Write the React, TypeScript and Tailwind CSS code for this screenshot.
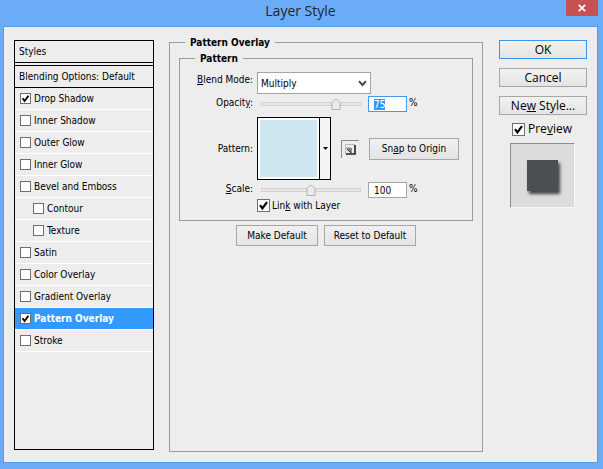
import React, { useState, useEffect, useRef } from 'react';

interface CheckBoxProps {
  checked: boolean;
  onChange: (checked: boolean) => void;
  id: string;
  size?: 'small' | 'normal';
}

const CheckBox: React.FC<CheckBoxProps> = ({ checked, onChange, id, size = 'normal' }) => (
  <span className="grid shrink-0">
    <input
      id={id}
      type="checkbox"
      checked={checked}
      onChange={(e) => onChange(e.target.checked)}
      className={`col-start-1 row-start-1 appearance-none border border-[#6e6e6e] bg-white ${
        size === 'small' ? 'size-[11px]' : 'size-[13px]'
      }`}
    />
    {checked && (
      <svg
        viewBox="0 0 13 13"
        className={`pointer-events-none col-start-1 row-start-1 ${size === 'small' ? 'size-[11px]' : 'size-[13px]'}`}
      >
        <path d="M3 6.2 L5.4 9.4 L10 3.2" fill="none" stroke="#000" strokeWidth="2.2" />
      </svg>
    )}
  </span>
);

interface SliderProps {
  label: string;
  value: number;
  max: number;
  onChange: (value: number) => void;
}

const Slider: React.FC<SliderProps> = ({ label, value, max, onChange }) => (
  <div className="relative flex h-4 w-[100px] items-center">
    <input
      type="range"
      aria-label={label}
      min={0}
      max={max}
      value={value}
      onChange={(e) => onChange(Number(e.target.value))}
      className="h-1 w-full appearance-none border border-[#d2d2d2] bg-[#e6e6e6] [&::-webkit-slider-thumb]:size-3 [&::-webkit-slider-thumb]:appearance-none [&::-webkit-slider-thumb]:opacity-0"
    />
    <svg
      viewBox="0 0 11 13"
      className="pointer-events-none absolute top-[2px] h-[13px] w-[11px] -translate-x-1/2"
      style={{ left: `${(value / max) * 100}%` }}
    >
      <path d="M1.5 11.5 V4.5 L4.5 1.5 H6.5 L9.5 4.5 V11.5 Z" fill="#ececec" stroke="#b0b0b0" />
    </svg>
  </div>
);

interface PercentFieldProps {
  id: string;
  value: number;
  onChange: (value: number) => void;
  active?: boolean;
}

const PercentField: React.FC<PercentFieldProps> = ({ id, value, onChange, active = false }) => {
  const inputRef = useRef<HTMLInputElement>(null);

  // The active field opens with its value selected
  useEffect(() => {
    if (active) {
      inputRef.current?.focus();
      inputRef.current?.select();
    }
  }, [active]);

  return (
    <div className="flex items-start gap-[2px]">
      <input
        ref={inputRef}
        id={id}
        type="text"
        value={value}
        onChange={(e) => onChange(Number(e.target.value) || 0)}
        className={`h-4 w-[39px] border bg-white px-[5px] outline-none selection:bg-[#3399ff] selection:text-white ${
          active ? 'border-[#4a98ea]' : 'border-[#a5a5a5]'
        }`}
      />
      <span className="leading-[13px]">%</span>
    </div>
  );
};

interface EffectItem {
  name: string;
  nested?: boolean;
}

const effects: EffectItem[] = [
  { name: 'Drop Shadow' },
  { name: 'Inner Shadow' },
  { name: 'Outer Glow' },
  { name: 'Inner Glow' },
  { name: 'Bevel and Emboss' },
  { name: 'Contour', nested: true },
  { name: 'Texture', nested: true },
  { name: 'Satin' },
  { name: 'Color Overlay' },
  { name: 'Gradient Overlay' },
  { name: 'Pattern Overlay' },
  { name: 'Stroke' },
];

const StyleList: React.FC = () => {
  const [enabled, setEnabled] = useState<string[]>(['Drop Shadow', 'Pattern Overlay']);
  const selected = 'Pattern Overlay';

  const toggle = (name: string, on: boolean) => {
    setEnabled(on ? [...enabled, name] : enabled.filter((n) => n !== name));
  };

  return (
    <aside className="mt-[4px] mb-[2px] w-[140px] shrink-0 border border-black">
      <button type="button" className="block h-[22px] w-full border-b border-black px-1 text-left">
        Styles
      </button>
      <button
        type="button"
        className="mt-[2px] block h-[23px] w-full border-y border-black px-1 text-left whitespace-nowrap"
      >
        Blending Options: Default
      </button>
      <ul>
        {effects.map(({ name, nested }) => (
          <li
            key={name}
            className={`flex h-[22px] items-center gap-[3px] border-b border-white pr-1 ${
              nested ? 'pl-[18px]' : 'pl-[5px]'
            } ${name === selected ? 'bg-[#3399ff] font-bold text-white' : ''}`}
          >
            <CheckBox
              id={`effect-${name}`}
              size="small"
              checked={enabled.includes(name)}
              onChange={(on) => toggle(name, on)}
            />
            <label htmlFor={`effect-${name}`} className="whitespace-nowrap">
              {name}
            </label>
          </li>
        ))}
      </ul>
    </aside>
  );
};

const smallButton =
  'border border-[#a6a6a6] bg-linear-to-b from-[#f0f0f0] to-[#e4e4e4] text-center whitespace-nowrap';
const rowLabel = 'w-[73px] shrink-0 text-right whitespace-nowrap';

const PatternPanel: React.FC = () => {
  const [opacity, setOpacity] = useState(75);
  const [scale, setScale] = useState(100);
  const [linked, setLinked] = useState(true);

  return (
    <fieldset className="min-w-0 flex-1 border border-[#9a9a9a] px-[9px] pt-[3px]">
      <legend className="ml-[6px] px-[5px] leading-[13px] font-bold">Pattern Overlay</legend>

      <fieldset className="border border-[#9a9a9a] pt-[7px] pb-2">
        <legend className="ml-[15px] px-[5px] leading-[13px] font-bold">Pattern</legend>

        <div className="flex gap-1">
          <label htmlFor="blend" className={`${rowLabel} leading-[16px]`}>
            <u>B</u>lend Mode:
          </label>
          <div className="grid w-[114px]">
            <select
              id="blend"
              className="col-start-1 row-start-1 h-[22px] appearance-none border border-[#a5a5a5] bg-white pl-[3px]"
            >
              <option>Multiply</option>
              <option>Normal</option>
              <option>Screen</option>
            </select>
            <svg
              viewBox="0 0 9 7"
              className="pointer-events-none col-start-1 row-start-1 mr-1 h-[7px] w-[9px] self-center justify-self-end"
            >
              <path d="M1 1.2 L4.5 5 L8 1.2" fill="none" stroke="#444" strokeWidth="1.9" />
            </svg>
          </div>
        </div>

        <div className="mt-[2px] flex gap-1">
          <label htmlFor="opacity" className={`${rowLabel} leading-[14px]`}>
            Opacit<u>y</u>:
          </label>
          <div className="flex gap-[7px] pl-1">
            <Slider label="Opacity slider" value={opacity} max={100} onChange={setOpacity} />
            <PercentField id="opacity" value={opacity} onChange={setOpacity} active />
          </div>
        </div>

        <div className="mt-[5px] flex items-center gap-1">
          <span className={rowLabel}>Pattern:</span>
          <button
            type="button"
            aria-label="Choose pattern"
            className="flex h-[63px] w-[74px] shrink-0 border border-black bg-[#f4f4f4]"
          >
            <span className="h-full flex-1 border-2 border-white bg-[#cde6f0]" />
            <span className="flex h-full w-[11px] items-center justify-center border-l border-black">
              <svg viewBox="0 0 5 3" className="h-[3px] w-[5px]">
                <path d="M0 0 H5 L2.5 3 Z" fill="#000" />
              </svg>
            </span>
          </button>
          <button
            type="button"
            aria-label="New preset"
            className="ml-[6px] flex size-[18px] shrink-0 items-center justify-center border-t border-l border-[#8a8a8a]"
          >
            <svg viewBox="0 0 11 11" className="size-[11px]">
              <path d="M0.5 10 V0.5 H10" fill="none" stroke="#b5b5b5" />
              <path d="M1 10 H10 V1" fill="none" stroke="#222" strokeWidth="1.6" />
              <path d="M1.5 3.5 H5.5 V9 L1.5 5 Z" fill="#8a8a8a" />
              <path d="M2 5 L6 9 V4" fill="none" stroke="#333" />
            </svg>
          </button>
          <button type="button" className={`${smallButton} ml-[6px] h-[22px] w-[90px]`}>
            Sn<u>a</u>p to Origin
          </button>
        </div>

        <div className="mt-[2px] flex gap-1">
          <label htmlFor="scale" className={`${rowLabel} leading-[14px]`}>
            <u>S</u>cale:
          </label>
          <div className="flex gap-[7px] pl-1">
            <Slider label="Scale slider" value={scale} max={200} onChange={setScale} />
            <PercentField id="scale" value={scale} onChange={setScale} />
          </div>
        </div>

        <div className="mt-px flex items-center gap-[2px] pl-[77px]">
          <CheckBox id="link" checked={linked} onChange={setLinked} />
          <label htmlFor="link" className="leading-[13px]">
            Lin<u>k</u> with Layer
          </label>
        </div>
      </fieldset>

      <div className="mt-1 flex justify-center gap-[6px]">
        <button type="button" className={`${smallButton} h-[21px] w-[82px]`}>
          Make Default
        </button>
        <button type="button" className={`${smallButton} h-[21px] w-[92px]`}>
          Reset to Default
        </button>
      </div>
    </fieldset>
  );
};

const dialogButton =
  "h-[19px] border bg-linear-to-b from-[#f2f2f2] to-[#e4e4e4] font-['Open_Sans',sans-serif] text-[12px] leading-[16px]";

const Actions: React.FC = () => {
  const [preview, setPreview] = useState(true);

  return (
    <div className="mt-[4px] ml-px flex w-[88px] shrink-0 flex-col">
      <div className="flex flex-col gap-[9px]">
        <button type="button" className={`${dialogButton} border-[#3c96f0]`}>
          OK
        </button>
        <button type="button" className={`${dialogButton} border-[#a6a6a6]`}>
          Cancel
        </button>
        <button type="button" className={`${dialogButton} border-[#a6a6a6]`}>
          Ne<u>w</u> Style...
        </button>
      </div>
      <div className="mt-[7px] flex items-center gap-[3px] pl-[13px]">
        <CheckBox id="preview" checked={preview} onChange={setPreview} />
        <label htmlFor="preview" className="font-['Open_Sans',sans-serif] text-[12px] leading-[14px]">
          Pre<u>v</u>iew
        </label>
      </div>
      <div className="mt-[7px] ml-[11px] flex size-[65px] items-center justify-center border border-t-[#8c8c8c] border-r-[#f8f8f8] border-b-[#f8f8f8] border-l-[#8c8c8c] bg-[#dcdcdc]">
        {preview && <div className="size-[31px] bg-[#4a4f52] shadow-[2px_3px_3px_#444]" />}
      </div>
    </div>
  );
};

export default function App() {
  return (
    <div className="flex min-h-screen flex-col bg-[#6aacf7] pr-[5px] pb-[6px] pl-[3px] font-['DejaVu_Sans_Condensed','DejaVu_Sans',sans-serif] text-[10px] text-black">
      <header className="grid h-[26px] grid-cols-[32px_1fr_32px]">
        <h1 className="col-start-2 text-center font-['Open_Sans',sans-serif] text-[14px] leading-[21px] text-[#262626]">
          Layer Style
        </h1>
        <button
          type="button"
          aria-label="Close"
          className="flex h-4 w-8 items-center justify-center bg-[#c75050]"
        >
          <svg viewBox="0 0 8 8" className="size-2">
            <path d="M0.8 0.8 L7.2 7.2 M7.2 0.8 L0.8 7.2" stroke="#fff" strokeWidth="1.7" />
          </svg>
        </button>
      </header>
      <main className="flex flex-1 gap-[15px] border border-[#5a9ae0] bg-[#ededed] px-[10px] pt-[9px] pb-[10px]">
        <StyleList />
        <PatternPanel />
        <Actions />
      </main>
    </div>
  );
}
